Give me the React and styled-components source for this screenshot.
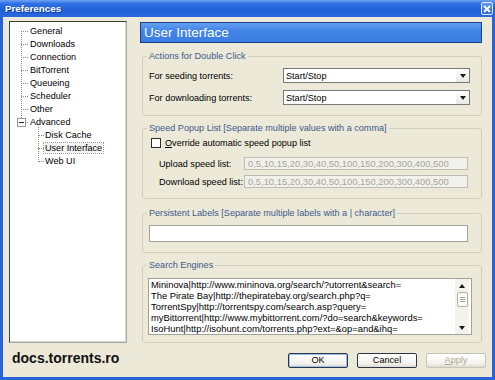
import React from "react";
import styled, { createGlobalStyle } from "styled-components";

const GlobalStyle = createGlobalStyle`
  html, body {
    margin: 0;
    padding: 0;
    background: #ece9d8;
  }
  body {
    font-family: "Liberation Sans", Arial, sans-serif;
    font-size: 9.1px;
    color: #000;
  }
  * {
    box-sizing: border-box;
  }
`;

// Window chrome

const Window = styled.div`
  width: 495px;
  height: 380px;
  display: flex;
  flex-direction: column;
  overflow: hidden;
`;

const TitleBar = styled.div`
  height: 17px;
  flex: none;
  display: flex;
  align-items: center;
  justify-content: space-between;
  padding: 0 2px 0 5px;
  background: linear-gradient(180deg, #6aa3f2 0%, #2f6fe2 22%, #2160d8 60%, #2a68dc 100%);
  color: #fff;
  font-weight: bold;
  font-size: 9.8px;
  text-shadow: 1px 1px 0 #0d3c9c;
`;

const CloseButton = styled.div`
  width: 12px;
  height: 13px;
  border: 1px solid #e4ecfc;
  border-radius: 2px;
  background: linear-gradient(180deg, #5e98f2, #2b66db);
  display: flex;
  align-items: center;
  justify-content: center;
`;

const Client = styled.div`
  flex: 1;
  display: flex;
  flex-direction: column;
  background: #ece9d8;
  border: 3px solid #2a62d8;
  border-top: none;
  padding: 4px 10px 0 6px;
`;

const Main = styled.div`
  display: flex;
  gap: 13px;
  height: 322px;
`;

// Tree

const Tree = styled.div`
  width: 118px;
  flex: none;
  background: #fff;
  border: 1px solid;
  border-color: #3c3c3c #a8a8a0 #a8a8a0 #3c3c3c;
  box-shadow: inset -1px -1px 0 #d8d8d0;
`;

const TreeList = styled.ul`
  list-style: none;
  margin: 0;
  padding: 3px 0 0 0;
  position: relative;

  &::before {
    content: "";
    position: absolute;
    left: 11px;
    top: 9px;
    height: 91px;
    border-left: 1px dotted #8c8c8c;
  }
`;

const ChildGroup = styled.div`
  position: relative;

  &::before {
    content: "";
    position: absolute;
    left: 28px;
    top: -2px;
    height: 35px;
    border-left: 1px dotted #8c8c8c;
  }
`;

const TreeItem = styled.li`
  position: relative;
  height: 13px;
  line-height: 13px;
  padding-left: ${(p) => (p.$level ? 34 : 19)}px;
  white-space: nowrap;

  &::before {
    content: "";
    position: absolute;
    left: ${(p) => (p.$level ? 28 : 11)}px;
    top: 6px;
    width: ${(p) => (p.$level ? 6 : 7)}px;
    border-top: 1px dotted #8c8c8c;
  }
`;

const ItemText = styled.span`
  padding: 0 1px;
  outline: ${(p) => (p.$selected ? "1px dotted #9a9a9a" : "none")};
  background: ${(p) => (p.$selected ? "#f4f4f2" : "transparent")};
`;

const Expander = styled.span`
  position: absolute;
  left: 7px;
  top: 2px;
  width: 9px;
  height: 9px;
  border: 1px solid #8e9aa6;
  background: #fff;
  z-index: 1;

  &::after {
    content: "";
    position: absolute;
    left: 1px;
    top: 3px;
    width: 5px;
    border-top: 1px solid #222;
  }
`;

// Right panel

const Panel = styled.div`
  width: 342px;
  display: flex;
  flex-direction: column;
`;

const Header = styled.div`
  height: 21px;
  margin-top: 1px;
  border: 1px solid #1b3f8a;
  background: linear-gradient(180deg, #64a0f0 0%, #4384e6 40%, #3b7de2 100%);
  color: #fff;
  font-size: 13.5px;
  padding-left: 3px;
  display: flex;
  align-items: center;
`;

const Group = styled.fieldset`
  margin: ${(p) => p.$mt}px 0 0 2px;
  padding: ${(p) => p.$pad};
  border: 1px solid #d0d0bf;
  border-radius: 3px;
  min-width: 0;
`;

const Legend = styled.legend`
  padding: 0 2px;
  margin-left: -2px;
  line-height: 11px;
  color: #3c5a8a;
`;

const FormGrid = styled.div`
  display: grid;
  grid-template-columns: 134px 187px;
  row-gap: 7px;
  align-items: center;
`;

const Combo = styled.div`
  height: 15px;
  border: 1px solid #7a7a78;
  background: #fff;
  display: flex;
  align-items: center;
`;

const ComboText = styled.span`
  flex: 1;
  padding-left: 2px;
`;

const ComboButton = styled.span`
  width: 13px;
  height: 13px;
  display: flex;
  align-items: center;
  justify-content: center;
  background: linear-gradient(180deg, #ffffff, #e8e8e4);
`;

const Arrow = styled.span`
  width: 0;
  height: 0;
  border-left: 3.5px solid transparent;
  border-right: 3.5px solid transparent;
  border-${(p) => (p.$up ? "bottom" : "top")}: 4px solid #1a1a1a;
`;

const CheckRow = styled.label`
  display: flex;
  align-items: center;
  gap: 4px;
  height: 15px;
  margin-left: 2px;
`;

const CheckBox = styled.span`
  width: 10px;
  height: 10px;
  border: 1px solid #2e2e2e;
  background: #fff;
`;

const SpeedGrid = styled.div`
  display: grid;
  grid-template-columns: 85px 224px;
  row-gap: 5px;
  align-items: center;
  padding-left: 10px;
  margin-top: 7px;
`;

const DisabledField = styled.div`
  height: 13px;
  line-height: 11px;
  border: 1px solid #bdbdb4;
  background: #f1f0ea;
  color: #a6a69e;
  padding-left: 3px;
  font-size: 9.4px;
  white-space: nowrap;
  overflow: hidden;
`;

const TextInput = styled.div`
  width: 319px;
  height: 17px;
  border: 1px solid #a3a39b;
  background: #fff;
`;

const SearchBox = styled.div`
  width: 324px;
  height: 57px;
  margin-left: -1px;
  border: 1px solid #a3a39b;
  background: #fff;
  display: flex;
`;

const SearchText = styled.div`
  flex: 1;
  padding: 1px 0 0 2px;
  font-size: 9.4px;
  line-height: 10.9px;
  white-space: pre;
  overflow: hidden;
`;

const ScrollBar = styled.div`
  width: 14px;
  margin: 0 2px 0 0;
  background: #f3f2ec;
  display: flex;
  flex-direction: column;
  align-items: center;
`;

const ScrollArrow = styled.div`
  width: 14px;
  height: 13px;
  display: flex;
  align-items: center;
  justify-content: center;
`;

const Thumb = styled.div`
  width: 11px;
  height: 15px;
  border: 1px solid #b3b3ac;
  border-radius: 2px;
  background: #fbfbf8;
  display: flex;
  flex-direction: column;
  align-items: center;
  justify-content: center;
  gap: 1px;
`;

const Grip = styled.span`
  width: 5px;
  border-top: 1px solid #a0a0a0;
`;

const Spacer = styled.div`
  flex: 1;
`;

// Footer

const Footer = styled.div`
  flex: 1;
  display: flex;
  align-items: center;
  padding-left: 3px;
`;

const Watermark = styled.div`
  flex: 1;
  font-weight: bold;
  font-size: 14px;
  margin-bottom: 5px;
  color: #111;
`;

const Buttons = styled.div`
  display: flex;
  gap: 9px;
  margin-right: -4px;
`;

const Button = styled.div`
  width: 60px;
  height: 15px;
  border: 1px solid ${(p) => (p.$disabled ? "#c6c4b8" : "#2c3646")};
  border-radius: 2px;
  background: linear-gradient(180deg, #ffffff 0%, #f4f3ee 70%, #dedad0 100%);
  box-shadow: ${(p) => (p.$default ? "inset 0 0 0 1px #9cc0ee" : "none")};
  color: ${(p) => (p.$disabled ? "#aca899" : "#000")};
  display: flex;
  align-items: center;
  justify-content: center;
`;

const speeds = "0,5,10,15,20,30,40,50,100,150,200,300,400,500";

const engines = [
  "Mininova|http://www.mininova.org/search/?utorrent&search=",
  "The Pirate Bay|http://thepiratebay.org/search.php?q=",
  "TorrentSpy|http://torrentspy.com/search.asp?query=",
  "myBittorrent|http://www.mybittorrent.com/?do=search&keywords=",
  "IsoHunt|http://isohunt.com/torrents.php?ext=&op=and&ihq=",
];

const topItems = [
  "General",
  "Downloads",
  "Connection",
  "BitTorrent",
  "Queueing",
  "Scheduler",
  "Other",
];

function App() {
  return (
    <>
      <GlobalStyle />
      <Window>
        <TitleBar>
          <span>Preferences</span>
          <CloseButton>
            <svg width="8" height="8" viewBox="0 0 8 8">
              <path d="M1 1L7 7M7 1L1 7" stroke="#fff" strokeWidth="1.8" />
            </svg>
          </CloseButton>
        </TitleBar>

        <Client>
          <Main>
            <Tree>
              <TreeList>
                {topItems.map((t) => (
                  <TreeItem key={t}>
                    <ItemText>{t}</ItemText>
                  </TreeItem>
                ))}
                <TreeItem>
                  <Expander />
                  <ItemText>Advanced</ItemText>
                </TreeItem>
                <ChildGroup>
                  <TreeItem $level={1}>
                    <ItemText>Disk Cache</ItemText>
                  </TreeItem>
                  <TreeItem $level={1}>
                    <ItemText $selected>User Interface</ItemText>
                  </TreeItem>
                  <TreeItem $level={1}>
                    <ItemText>Web UI</ItemText>
                  </TreeItem>
                </ChildGroup>
              </TreeList>
            </Tree>

            <Panel>
              <Header>User Interface</Header>

              <Group $mt={8} $pad="6px 11px 10px 6px">
                <Legend>Actions for Double Click</Legend>
                <FormGrid>
                  <span>For seeding torrents:</span>
                  <Combo>
                    <ComboText>Start/Stop</ComboText>
                    <ComboButton>
                      <Arrow />
                    </ComboButton>
                  </Combo>
                  <span>For downloading torrents:</span>
                  <Combo>
                    <ComboText>Start/Stop</ComboText>
                    <ComboButton>
                      <Arrow />
                    </ComboButton>
                  </Combo>
                </FormGrid>
              </Group>

              <Group $mt={7} $pad="1px 13px 10px 6px">
                <Legend>Speed Popup List [Separate multiple values with a comma]</Legend>
                <CheckRow>
                  <CheckBox />
                  <span>
                    <u>O</u>verride automatic speed popup list
                  </span>
                </CheckRow>
                <SpeedGrid>
                  <span>Upload speed list:</span>
                  <DisabledField>{speeds}</DisabledField>
                  <span>Download speed list:</span>
                  <DisabledField>{speeds}</DisabledField>
                </SpeedGrid>
              </Group>

              <Group $mt={9} $pad="6px 13px 10px 6px">
                <Legend>Persistent Labels [Separate multiple labels with a | character]</Legend>
                <TextInput />
              </Group>

              <Group $mt={7} $pad="7px 9px 7px 6px">
                <Legend>Search Engines</Legend>
                <SearchBox>
                  <SearchText>{engines.join("\n")}</SearchText>
                  <ScrollBar>
                    <ScrollArrow>
                      <Arrow $up />
                    </ScrollArrow>
                    <Thumb>
                      <Grip />
                      <Grip />
                      <Grip />
                    </Thumb>
                    <Spacer />
                    <ScrollArrow>
                      <Arrow />
                    </ScrollArrow>
                  </ScrollBar>
                </SearchBox>
              </Group>
            </Panel>
          </Main>

          <Footer>
            <Watermark>docs.torrents.ro</Watermark>
            <Buttons>
              <Button $default>OK</Button>
              <Button>Cancel</Button>
              <Button $disabled>
                <span>
                  <u>A</u>pply
                </span>
              </Button>
            </Buttons>
          </Footer>
        </Client>
      </Window>
    </>
  );
}

export default App;
